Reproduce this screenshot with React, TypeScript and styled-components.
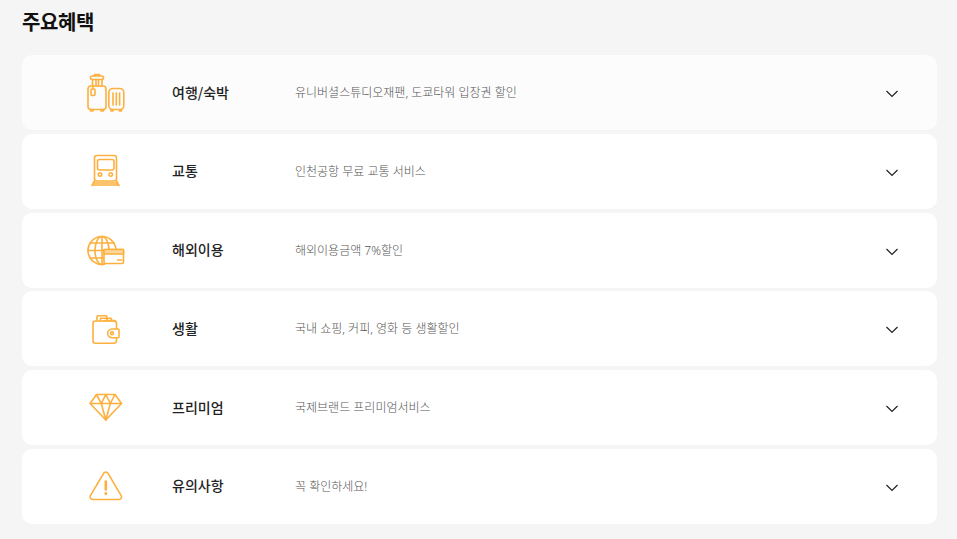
import styled, { createGlobalStyle } from "styled-components";
import { ReactNode } from "react";

const GlobalStyle = createGlobalStyle`
  html, body {
    margin: 0;
    padding: 0;
    background: #f5f5f5;
    overflow: hidden;
  }
  * { box-sizing: border-box; }
`;

const Page = styled.div`
  width: 957px;
  height: 539px;
  padding: 0 20px 0 22px;
  font-family: "Noto Sans CJK KR", "Noto Sans", sans-serif;
  background: #f5f5f5;
`;

const Title = styled.h2`
  margin: 0;
  height: 55px;
  padding-top: 6px;
  font-size: 20px;
  line-height: 32px;
  font-weight: 700;
  letter-spacing: -0.4px;
  color: #111;
`;

const List = styled.ul`
  margin: 0;
  padding: 0;
  list-style: none;
  display: flex;
  flex-direction: column;
  gap: 3.8px;
`;

const Row = styled.li<{ $hover?: boolean }>`
  height: 75px;
  display: flex;
  align-items: center;
  border-radius: 10px;
  background: ${(p) => (p.$hover ? "#fcfcfc" : "#fff")};
`;

const IconBox = styled.div`
  width: 150px;
  flex: none;
  padding-left: 58px;
  display: flex;
  align-items: center;
`;

const Name = styled.div`
  width: 123px;
  flex: none;
  margin-top: -2px;
  font-size: 14px;
  font-weight: 500;
  color: #222;
`;

const Desc = styled.div`
  flex: 1;
  margin-top: -1px;
  font-family: "Noto Sans", "Noto Sans CJK KR", sans-serif;
  font-size: 12px;
  font-weight: 300;
  color: #555;
`;

const Chevron = styled.svg`
  flex: none;
  margin-right: 38px;
  margin-top: 3px;
`;

const Icon = ({ children }: { children: ReactNode }) => (
  <svg
    width="50"
    height="50"
    viewBox="0 0 50 50"
    fill="none"
    stroke="#fdb03d"
    strokeWidth="1.6"
    strokeLinecap="round"
    strokeLinejoin="round"
  >
    {children}
  </svg>
);

const Luggage = () => (
  <Icon>
    <rect x="8" y="18" width="18" height="23.500" rx="3" />
    <path d="M10.500 41.500v1.500h2.500v-1.500M21 41.500v1.500h2.500v-1.500" />
    <path d="M12.500 18v-6.500M16 18v-6.500M18.500 18v-6.500M22 18v-6.500" />
    <rect x="10.500" y="8" width="13" height="3.500" rx="1.700" />
    <path d="M14.500 8V6.500h5V8" />
    <rect x="11" y="21" width="4" height="6.500" rx="1" />
    <path d="M13 18v3" />
    <rect x="28.800" y="20.500" width="15" height="21" rx="4" />
    <path d="M33 25v12M36.300 25v12M39.600 25v12M31 41.500v1.500h2v-1.500M39.500 41.500v1.500h2v-1.500" />
  </Icon>
);

const Train = () => (
  <Icon>
    <rect x="14.500" y="9.500" width="22" height="25.500" rx="2.500" />
    <rect x="17.500" y="13.500" width="16.500" height="10.500" rx="2" />
    <circle cx="20" cy="28.500" r="1.700" />
    <circle cx="30.700" cy="28.500" r="1.700" />
    <path d="M14.500 35 12 39.500M36.500 35l2.500 4.500M14 37h23M12.500 39h26" />
  </Icon>
);

const GlobeCard = () => (
  <Icon>
    <path d="M24.500 39.300A14 14 0 1 1 36 25" />
    <ellipse cx="22" cy="25.500" rx="7" ry="14" />
    <path d="M22 11.500v28M10 18h24M8 25.500h16M10 33h14" />
    <rect x="24" y="24.500" width="19.500" height="14" rx="1.500" fill="#fff" />
    <rect x="24" y="24.500" width="19.500" height="4.500" fill="#ffd79c" stroke="#fdb03d" />
    <path d="M37.500 35h4" />
  </Icon>
);

const Wallet = () => (
  <Icon>
    <rect x="13" y="17" width="23.500" height="22.300" rx="2.500" />
    <path d="M17 17v-4.300a1 1 0 0 1 1-1h8.500l1 5.300" />
    <path d="M20.500 17v-2.700h10.500l.8 2.700" />
    <path d="M24 17v-.500h10.500l.8.500" />
    <path d="M38 25h-6a4.300 4.300 0 0 0 0 8.700h6a1 1 0 0 0 1-1V26a1 1 0 0 0-1-1Z" fill="#fff" />
    <circle cx="32" cy="29.300" r="1.400" />
  </Icon>
);

const Diamond = () => (
  <Icon>
    <path d="M16.500 11.500h18.500l6.500 9-15.700 16.500-15.700-16.500Z" />
    <path d="M10.500 20.500h31M16.500 11.500l4.800 9 4.500-9 4.500 9 4.700-9M21.300 20.500l4.500 16.500 4.500-16.500" />
  </Icon>
);

const Warning = () => (
  <Icon>
    <path d="M23.600 12.300a2.600 2.600 0 0 1 4.400 0l13.200 22.300a2.600 2.600 0 0 1-2.200 3.900H12.600a2.600 2.600 0 0 1-2.200-3.900Z" />
    <path d="M25.800 20.500v8" strokeWidth="2.600" />
    <path d="M25.800 32.500v.3" strokeWidth="2.800" />
  </Icon>
);

const rows = [
  { icon: <Luggage />, name: "여행/숙박", desc: "유니버셜스튜디오재팬, 도쿄타워 입장권 할인", hover: true },
  { icon: <Train />, name: "교통", desc: "인천공항 무료 교통 서비스" },
  { icon: <GlobeCard />, name: "해외이용", desc: "해외이용금액 7%할인" },
  { icon: <Wallet />, name: "생활", desc: "국내 쇼핑, 커피, 영화 등 생활할인" },
  { icon: <Diamond />, name: "프리미엄", desc: "국제브랜드 프리미엄서비스" },
  { icon: <Warning />, name: "유의사항", desc: "꼭 확인하세요!" },
];

export default function App() {
  return (
    <Page>
      <GlobalStyle />
      <Title>주요혜택</Title>
      <List>
        {rows.map((r) => (
          <Row key={r.name} $hover={r.hover}>
            <IconBox>{r.icon}</IconBox>
            <Name>{r.name}</Name>
            <Desc>{r.desc}</Desc>
            <Chevron width="14" height="8" viewBox="0 0 14 8" fill="none" stroke="#222" strokeWidth="1.200">
              <path d="M1.500 1l5.500 5.500 5.500-5.500" />
            </Chevron>
          </Row>
        ))}
      </List>
    </Page>
  );
}
